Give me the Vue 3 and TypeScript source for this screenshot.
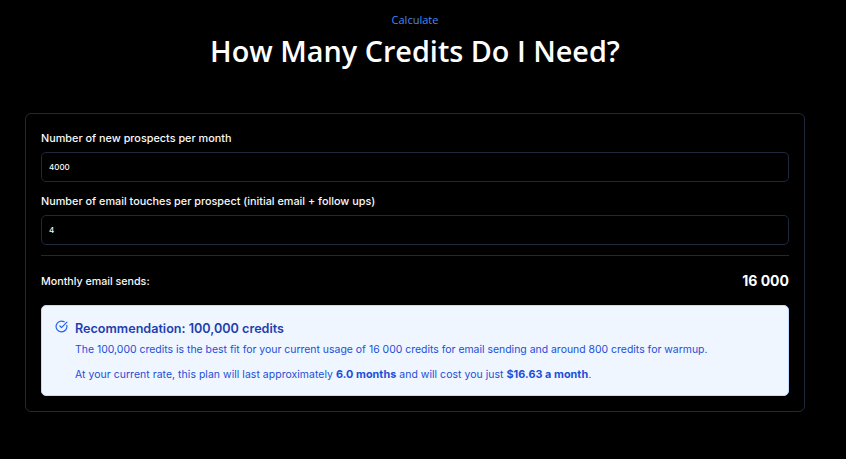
<script setup lang="ts">
const fields = [
  { label: 'Number of new prospects per month', value: '4000' },
  { label: 'Number of email touches per prospect (initial email + follow ups)', value: '4' },
]
</script>

<template>
  <main class="page">
    <header class="head">
      <p class="eyebrow">Calculate</p>
      <h1 class="title">How Many Credits Do I Need?</h1>
    </header>
    <section class="card">
      <div v-for="f in fields" :key="f.label" class="field">
        <label class="label">{{ f.label }}</label>
        <div class="input">{{ f.value }}</div>
      </div>
      <div class="sends">
        <span class="sends-label">Monthly email sends:</span>
        <span class="sends-value">16 000</span>
      </div>
      <div class="rec">
        <svg class="icon" viewBox="0 0 24 24" fill="none" stroke="currentColor" stroke-width="2.2" stroke-linecap="round" stroke-linejoin="round">
          <path d="M21.8 10A10 10 0 1 1 17 3.34" />
          <path d="m9 11 3 3L22 4" />
        </svg>
        <div class="rec-body">
          <h3 class="rec-title">Recommendation: 100,000 credits</h3>
          <p class="rec-text">The 100,000 credits is the best fit for your current usage of 16 000 credits for email sending and around 800 credits for warmup.</p>
          <p class="rec-text second">At your current rate, this plan will last approximately <strong>6.0 months</strong> and will cost you just <strong>$16.63 a month</strong>.</p>
        </div>
      </div>
    </section>
  </main>
</template>

<style>
html, body { margin: 0; background: #000; }
</style>

<style scoped>
.page {
  box-sizing: border-box;
  width: 846px;
  height: 459px;
  padding: 13px 41px 0 25px;
  background: #000;
  overflow: hidden;
  font-family: Inter, "Liberation Sans", sans-serif;
}
.head { text-align: center; margin-bottom: 44px; }
.eyebrow {
  margin: 0;
  font: 500 11px/14px "Open Sans", sans-serif;
  color: #4289f8;
}
.title {
  margin: 6px 0 0;
  font: 600 28.8px/36px "Open Sans", sans-serif;
  color: #fff;
}
.card {
  box-sizing: border-box;
  height: 299px;
  padding: 15px 15px;
  border: 1px solid #1e293b;
  border-radius: 6px;
}
.field { margin-bottom: 10px; }
.label {
  display: block;
  font-size: 10.85px;
  line-height: 18px;
  font-weight: 500;
  color: #f8fafc;
  margin-bottom: 5px;
}
.input {
  box-sizing: border-box;
  height: 30px;
  padding: 0 7px;
  border: 1px solid #1e293b;
  border-radius: 5px;
  font-size: 8px;
  font-weight: 500;
  line-height: 28px;
  color: #f8fafc;
}
.sends {
  display: flex;
  justify-content: space-between;
  align-items: center;
  border-top: 1px solid #1e293b;
  height: 49px;
}
.sends-label { padding-top: 2px; font-size: 10.7px; font-weight: 500; color: #f8fafc; }
.sends-value { font-size: 14px; font-weight: 700; color: #fff; }
.rec {
  position: relative;
  box-sizing: border-box;
  height: 91px;
  padding: 14px 16px 0 33px;
  background: #eff6ff;
  border: 1px solid #bfdbfe;
  border-radius: 5px;
  color: #1d4ed8;
}
.icon { position: absolute; left: 13px; top: 14px; width: 13px; height: 13px; color: #2563eb; }
.rec-title { margin: 0; font-size: 12.6px; line-height: 18px; font-weight: 600; color: #1e40af; }
.rec-text { margin: 4px 0 0; font-size: 10.45px; line-height: 16px; }
.rec-text.second { margin-top: 9px; letter-spacing: 0.05px; }
strong { font-size: 10.8px; font-weight: 700; }
</style>
